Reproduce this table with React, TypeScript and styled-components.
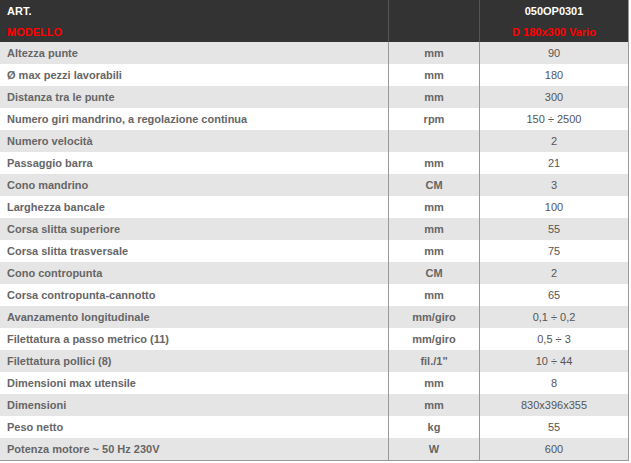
import React from "react";
import styled, { createGlobalStyle } from "styled-components";

const Global = createGlobalStyle`
  html, body { margin: 0; padding: 0; background: #fff; }
  body { font-family: "Liberation Sans", Arial, sans-serif; }
`;

const Table = styled.table`
  width: 629px;
  border-collapse: collapse;
  border-right: 1px solid #999;
  border-bottom: 1px solid #999;
  font-family: "Liberation Sans", Arial, sans-serif;
  font-size: 11px;
`;

const HeadRow = styled.tr`
  background: #333;
  height: 21px;
`;

const HeadCell = styled.td<{ $red?: boolean; $center?: boolean; $line?: boolean }>`
  padding: 0 7px;
  font-weight: bold;
  color: ${(p) => (p.$red ? "#ff0000" : "#fff")};
  text-align: ${(p) => (p.$center ? "center" : "left")};
  border-left: ${(p) => (p.$line ? "1px solid #555" : "none")};
  vertical-align: middle;
`;

const Row = styled.tr<{ $alt: boolean }>`
  background: ${(p) => (p.$alt ? "#e5e5e5" : "#fff")};
  height: 22px;
`;

const Label = styled.td`
  padding: 0 7px;
  font-weight: bold;
  color: #666;
  width: 374px;
`;

const Unit = styled.td`
  text-align: center;
  font-weight: bold;
  color: #666;
  border-left: 1px solid #999;
  width: 88px;
`;

const Value = styled.td`
  text-align: center;
  color: #555;
  border-left: 1px solid #999;
`;

const rows: [string, string, string][] = [
  ["Altezza punte", "mm", "90"],
  ["Ø max pezzi lavorabili", "mm", "180"],
  ["Distanza tra le punte", "mm", "300"],
  ["Numero giri mandrino, a regolazione continua", "rpm", "150 ÷ 2500"],
  ["Numero velocità", "", "2"],
  ["Passaggio barra", "mm", "21"],
  ["Cono mandrino", "CM", "3"],
  ["Larghezza bancale", "mm", "100"],
  ["Corsa slitta superiore", "mm", "55"],
  ["Corsa slitta trasversale", "mm", "75"],
  ["Cono contropunta", "CM", "2"],
  ["Corsa contropunta-cannotto", "mm", "65"],
  ["Avanzamento longitudinale", "mm/giro", "0,1 ÷ 0,2"],
  ["Filettatura a passo metrico (11)", "mm/giro", "0,5 ÷ 3"],
  ["Filettatura pollici (8)", "fil./1\"", "10 ÷ 44"],
  ["Dimensioni max utensile", "mm", "8"],
  ["Dimensioni", "mm", "830x396x355"],
  ["Peso netto", "kg", "55"],
  ["Potenza motore ~ 50 Hz 230V", "W", "600"],
];

export default function App() {
  return (
    <>
      <Global />
      <Table>
        <tbody>
          <HeadRow>
            <HeadCell>ART.</HeadCell>
            <HeadCell $line />
            <HeadCell $line $center>050OP0301</HeadCell>
          </HeadRow>
          <HeadRow>
            <HeadCell $red>MODELLO</HeadCell>
            <HeadCell $line />
            <HeadCell $line $center $red>D 180x300 Vario</HeadCell>
          </HeadRow>
          {rows.map(([l, u, v], i) => (
            <Row key={i} $alt={i % 2 === 0}>
              <Label>{l}</Label>
              <Unit>{u}</Unit>
              <Value>{v}</Value>
            </Row>
          ))}
        </tbody>
      </Table>
    </>
  );
}
